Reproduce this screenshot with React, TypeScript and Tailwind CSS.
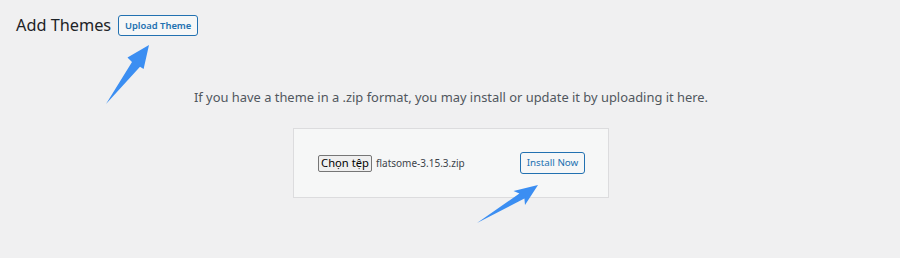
import React from 'react'

function Arrows() {
  return (
    <svg className="absolute inset-0 pointer-events-none" width="900" height="258" viewBox="0 0 900 258">
      <polygon
        fill="#3b8ef2"
        points="149,45 127.5,57.5 132,62 106,104 140,66.8 143.6,69"
      />
      <polygon
        fill="#3b8ef2"
        points="538,185 513.5,191 519.4,193.6 477,223 524.4,198.6 525,205"
      />
    </svg>
  )
}

export default function App() {
  return (
    <div className="relative w-[900px] h-[258px] bg-[#f0f0f1] overflow-hidden" style={{ fontFamily: '"Noto Sans", "Open Sans", sans-serif' }}>
      <div className="flex items-center gap-[7px] pl-[16px] pt-[15px]">
        <h1 className="text-[16.3px] leading-[21px] text-[#1d2327] font-normal">Add Themes</h1>
        <button className="h-[21px] w-[80px] border border-[#2271b1] rounded-[3px] bg-[#f6f7f7] text-[9.4px] font-semibold text-[#2271b1] leading-none">
          Upload Theme
        </button>
      </div>

      <p className="mt-[51px] text-center text-[12.9px] leading-[20px] text-[#50575e] pl-[2px]">
        If you have a theme in a .zip format, you may install or update it by uploading it here.
      </p>

      <div className="mt-[21px] flex justify-center pl-[2px]">
        <div className="w-[316px] h-[70px] border border-[#dcdcde] bg-[#f6f7f7] flex items-center justify-between pl-[24px] pr-[23px]">
          <div className="flex items-center gap-[4px]">
            <button className="h-[17px] w-[54px] border border-[#767676] rounded-[2px] bg-[#efefef] text-[11.2px] leading-none text-black">
              Chọn tệp
            </button>
            <span className="text-[10px] text-[#3c434a]">flatsome-3.15.3.zip</span>
          </div>
          <button className="h-[22px] w-[65px] border border-[#2271b1] rounded-[3px] bg-[#f6f7f7] text-[9.8px] leading-none text-[#2271b1]">
            Install Now
          </button>
        </div>
      </div>

      <Arrows />
    </div>
  )
}
